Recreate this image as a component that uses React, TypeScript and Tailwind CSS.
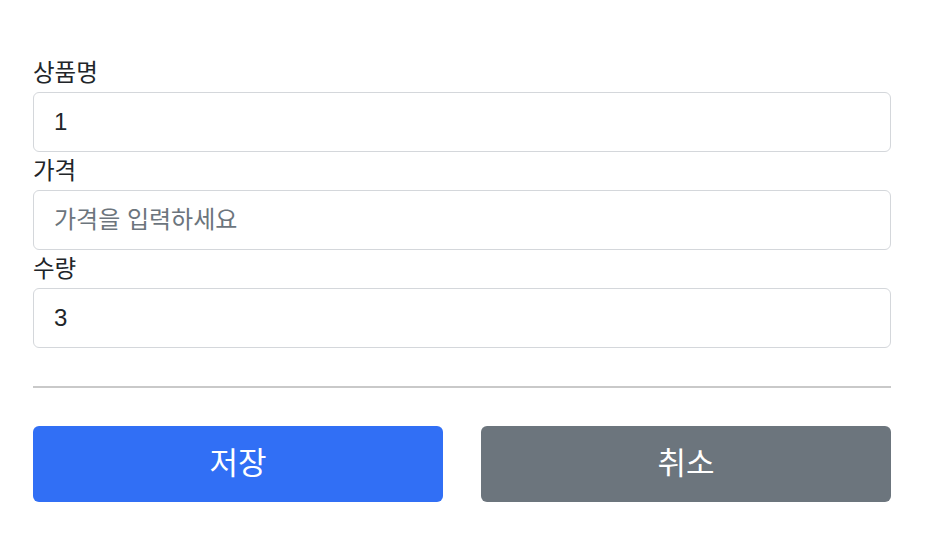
import type { ReactNode } from 'react';

const font = { fontFamily: '"Liberation Sans", "Noto Sans CJK KR", sans-serif' };

function Field({ id, label, children }: { id: string; label: string; children: ReactNode }) {
  return (
    <div className="flex flex-col">
      <label htmlFor={id} className="block h-[38px] leading-[38px] text-[23.5px] text-[#212529]">
        {label}
      </label>
      {children}
    </div>
  );
}

const inputCls =
  'block w-full h-[60px] rounded-[6px] border border-[#d4d7db] bg-white px-[20px] text-[24px] text-[#212529] placeholder:text-[#6c757d] outline-none';

export default function App() {
  return (
    <div className="min-h-screen bg-white" style={font}>
      <form className="ml-[33px] w-[858px] pt-[54px]" onSubmit={(e) => e.preventDefault()}>
        <Field id="itemName" label="상품명">
          <input id="itemName" type="text" className={inputCls} defaultValue="1" />
        </Field>
        <Field id="price" label="가격">
          <input id="price" type="text" className={inputCls} placeholder="가격을 입력하세요" />
        </Field>
        <Field id="quantity" label="수량">
          <input id="quantity" type="text" className={inputCls} defaultValue="3" />
        </Field>

        <hr className="my-[38px] border-0 border-t-2 border-[#c9c9c9]" />

        <div className="grid grid-cols-2 gap-[38px]">
          <button
            type="submit"
            className="h-[76px] w-full rounded-[6px] bg-[#316ff5] text-[31px] text-white"
          >
            저장
          </button>
          <button
            type="button"
            className="h-[76px] w-full rounded-[6px] bg-[#6c757d] text-[31px] text-white"
          >
            취소
          </button>
        </div>
      </form>
    </div>
  );
}
